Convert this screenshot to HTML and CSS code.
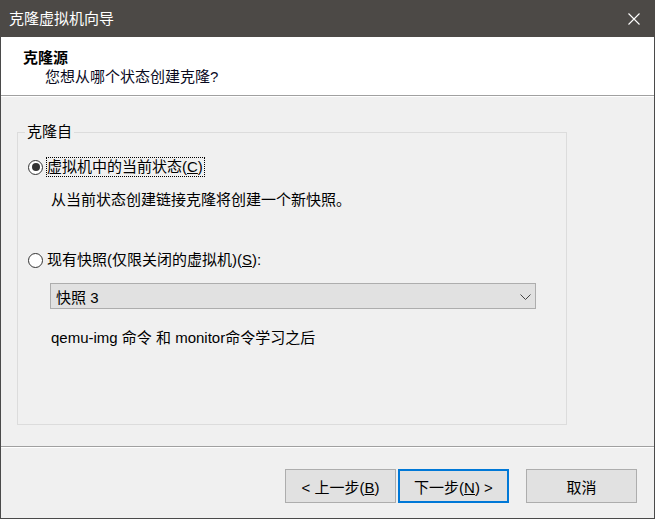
FILE: index.html
```html
<!DOCTYPE html>
<html lang="zh-CN">
<head>
  <meta charset="UTF-8" />
  <title>克隆虚拟机向导</title>
  <link rel="stylesheet" href="styles.css">
</head>
<body>
  <div class="dialog">
    <!-- Title bar -->
    <div class="titlebar">
      <span class="title">克隆虚拟机向导</span>
      <svg class="close" width="12" height="12" viewBox="0 0 12 12">
        <path d="M0.5 0.5 L11.5 11.5 M11.5 0.5 L0.5 11.5" stroke="#fff" stroke-width="1.1" fill="none"/>
      </svg>
    </div>

    <!-- Wizard header -->
    <div class="header">
      <div class="header-title">克隆源</div>
      <div class="header-sub">您想从哪个状态创建克隆?</div>
    </div>

    <!-- Page body -->
    <div class="main">
      <div class="group">
        <div class="group-title">克隆自</div>

        <div class="option">
          <span class="radio checked"></span>
          <span class="label focus">虚拟机中的当前状态(<u>C</u>)</span>
        </div>
        <div class="hint">从当前状态创建链接克隆将创建一个新快照。</div>

        <div class="option second">
          <span class="radio"></span>
          <span class="label">现有快照(仅限关闭的虚拟机)(<u>S</u>):</span>
        </div>
        <div class="combo">
          <span>快照 3</span>
          <svg class="chevron" width="11" height="6" viewBox="0 0 11 6">
            <polyline points="0.5,0.5 5.5,5.5 10.5,0.5" stroke="#444" stroke-width="1" fill="none"/>
          </svg>
        </div>
        <div class="hint note">qemu-img 命令 和 monitor命令学习之后</div>
      </div>
    </div>

    <!-- Buttons -->
    <div class="footer">
      <button class="btn">&lt; 上一步(<u>B</u>)</button>
      <button class="btn default">下一步(<u>N</u>) &gt;</button>
      <button class="btn cancel">取消</button>
    </div>
  </div>
</body>
</html>
```

FILE: styles.css
```css
body {
  margin: 0;
  font-family: "Liberation Sans", "Noto Sans CJK SC", sans-serif;
  font-size: 15px;
  color: #000;
}
.dialog {
  width: 655px;
  height: 519px;
  box-sizing: border-box;
  border: 1px solid #4a4a4a;
  border-top: none;
  background: #f0f0f0;
  display: flex;
  flex-direction: column;
}
.titlebar {
  height: 37px;
  flex: none;
  background: #4c4946;
  color: #fff;
  display: flex;
  align-items: center;
  justify-content: space-between;
  padding: 0 15px 0 9px;
  margin: 0 -1px;
}
.title {
  line-height: 20px;
}
.header {
  height: 59px;
  flex: none;
  box-sizing: border-box;
  background: #fff;
  border-bottom: 1px solid #a0a0a0;
  padding-top: 11px;
  line-height: 19px;
}
.header-title {
  font-weight: bold;
  padding-left: 22px;
}
.header-sub {
  padding-left: 44px;
  color: #0a0a1e;
}
.main {
  flex: 1;
  border-top: 1px solid #fff;
  padding: 35px 87px 0 16px;
}
.group {
  height: 293px;
  box-sizing: border-box;
  border: 1px solid #dcdcdc;
}
.group-title {
  width: max-content;
  margin: -11px 0 0 7px;
  padding: 0 2px;
  background: #f0f0f0;
  line-height: 20px;
}
.option {
  display: flex;
  align-items: center;
  margin-top: 15px;
  padding-left: 10px;
  line-height: 18px;
}
.option.second {
  margin-top: 40px;
}
.radio {
  width: 15px;
  height: 15px;
  box-sizing: border-box;
  border: 1px solid #333;
  border-radius: 50%;
  background: #fff;
  display: flex;
  align-items: center;
  justify-content: center;
  margin-right: 3px;
}
.radio.checked::after {
  content: "";
  width: 8px;
  height: 8px;
  border-radius: 50%;
  background: #333;
}
.label {
  border: 1px dotted transparent;
  padding: 0 1px 0 0;
}
.label.focus {
  border-color: #000;
}
.hint {
  margin-top: 13px;
  padding-left: 33px;
  line-height: 20px;
}
.combo {
  width: 486px;
  height: 26px;
  box-sizing: border-box;
  margin: 13px 0 0 32px;
  border: 1px solid #adadad;
  background: #e1e1e1;
  display: flex;
  align-items: center;
  justify-content: space-between;
  padding: 0 4px 0 5px;
}
.chevron {
  margin-top: 1px;
}
.hint.note {
  margin-top: 19px;
}
.footer {
  height: 72px;
  flex: none;
  box-sizing: border-box;
  border-top: 1px solid #a0a0a0;
  box-shadow: inset 0 1px 0 #fff;
  display: flex;
  justify-content: flex-end;
  align-items: flex-start;
  padding: 22px 17px 0 0;
}
.btn {
  width: 111px;
  height: 34px;
  box-sizing: border-box;
  border: 1px solid #adadad;
  background: #e1e1e1;
  font-family: inherit;
  font-size: 15px;
  color: #000;
  padding: 0;
  margin-left: 2px;
}
.btn.default {
  border: 2px solid #0078d7;
}
.btn.cancel {
  margin-left: 17px;
}
```
